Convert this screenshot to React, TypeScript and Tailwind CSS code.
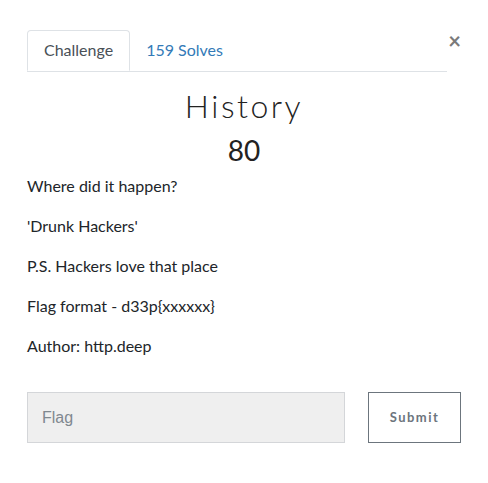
export default function App() {
  return (
    <div className="w-[488px] h-[483px] bg-white" style={{ fontFamily: "Lato, 'Open Sans', sans-serif" }}>
      <div className="px-[27px] pt-[30px]">
        <div className="flex items-start">
          <div className="flex flex-1 border-b border-[#dee2e6]">
            <div className="h-[41px] px-[16px] pb-[2px] flex items-center border border-[#dee2e6] border-b-white -mb-px rounded-t-[4px] text-[16px] text-[#495057] bg-white">
              Challenge
            </div>
            <div className="h-[41px] px-[16px] pb-[2px] flex items-center text-[16px] text-[#337ab7]">
              159 Solves
            </div>
          </div>
          <button className="w-[14px] mt-[1px] text-[22px] leading-[20px] font-bold text-[#7a7a7a] text-right">×</button>
        </div>

        <div className="text-center mt-[14px]">
          <h2 className="text-[32px] leading-[40px] font-light tracking-[2.5px] text-[#222]">History</h2>
          <h3 className="text-[28px] leading-[34px] text-[#222] mt-[7px]">80</h3>
        </div>

        <div className="mt-[7px] text-[16px] text-[#212529] leading-[24px]">
          <p className="mb-[16px]">Where did it happen?</p>
          <p className="mb-[16px]">'Drunk Hackers'</p>
          <p className="mb-[16px]">P.S. Hackers love that place</p>
          <p className="mb-[16px]">Flag format - d33p{"{xxxxxx}"}</p>
          <p>Author: http.deep</p>
        </div>

        <div className="flex mt-[34px] gap-[23px]">
          <input
            placeholder="Flag"
            className="w-[318px] h-[51px] bg-[#efefef] border border-[#d4d6d9] px-[14px] text-[16px] placeholder:text-[#808890] outline-none"
            style={{ fontFamily: "'Liberation Sans', Arial, sans-serif" }}
          />
          <button className="w-[93px] h-[51px] border border-[#6c757d] text-[13px] font-bold tracking-[1.5px] text-[#6c757d]">
            Submit
          </button>
        </div>
      </div>
    </div>
  );
}
